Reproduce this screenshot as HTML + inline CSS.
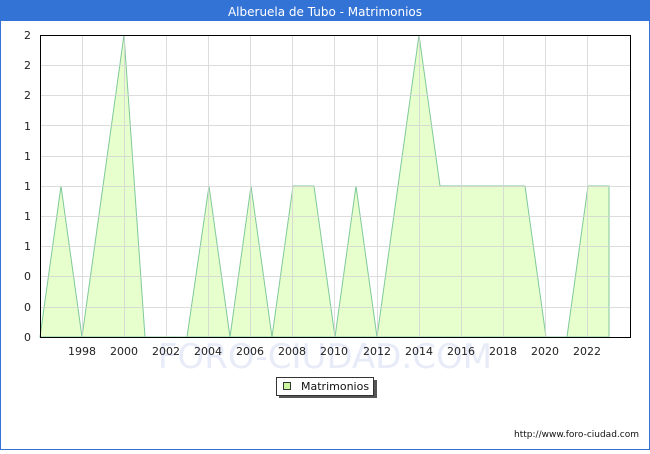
<!DOCTYPE html>
<html><head><style>
body{margin:0;width:650px;height:450px;overflow:hidden;font-family:"DejaVu Sans","Liberation Sans",sans-serif;}
</style></head><body>
<svg width="650" height="450" xmlns="http://www.w3.org/2000/svg" font-family="DejaVu Sans, Liberation Sans, sans-serif">
<rect x="0" y="0" width="650" height="450" fill="#3373d6"/>
<rect x="1" y="21" width="648" height="428" fill="#fff"/>
<text x="325" y="16" fill="#fff" font-size="12" text-anchor="middle">Alberuela de Tubo - Matrimonios</text>
<text x="325" y="368" fill="#e8ebf8" font-size="34" text-anchor="middle">FORO-CIUDAD.COM</text>
<polygon fill="#e6ffcc" stroke="#7fc99a" stroke-width="1" points="40,337 61,186 82,337 103,186 124,35 145,337 166,337 187,337 209,186 230,337 251,186 272,337 293,186 314,186 335,337 356,186 377,337 398,186 419,35 440,186 461,186 482,186 503,186 525,186 546,337 567,337 588,186 609,186 609,337"/>
<g stroke="#d4d4d4" stroke-width="1" opacity="0.8">
<line x1="40" y1="65.5" x2="630" y2="65.5"/><line x1="40" y1="95.5" x2="630" y2="95.5"/><line x1="40" y1="125.5" x2="630" y2="125.5"/><line x1="40" y1="156.5" x2="630" y2="156.5"/><line x1="40" y1="186.5" x2="630" y2="186.5"/><line x1="40" y1="216.5" x2="630" y2="216.5"/><line x1="40" y1="246.5" x2="630" y2="246.5"/><line x1="40" y1="276.5" x2="630" y2="276.5"/><line x1="40" y1="307.5" x2="630" y2="307.5"/>
<line x1="82.5" y1="35" x2="82.5" y2="337"/><line x1="124.5" y1="35" x2="124.5" y2="337"/><line x1="166.5" y1="35" x2="166.5" y2="337"/><line x1="208.5" y1="35" x2="208.5" y2="337"/><line x1="250.5" y1="35" x2="250.5" y2="337"/><line x1="292.5" y1="35" x2="292.5" y2="337"/><line x1="334.5" y1="35" x2="334.5" y2="337"/><line x1="377.5" y1="35" x2="377.5" y2="337"/><line x1="419.5" y1="35" x2="419.5" y2="337"/><line x1="461.5" y1="35" x2="461.5" y2="337"/><line x1="503.5" y1="35" x2="503.5" y2="337"/><line x1="545.5" y1="35" x2="545.5" y2="337"/><line x1="587.5" y1="35" x2="587.5" y2="337"/>
</g>
<rect x="40.5" y="35.5" width="590" height="302" fill="none" stroke="#000" stroke-width="1"/>
<g font-size="11" fill="#222" text-anchor="end">
<text x="31" y="39">2</text><text x="31" y="69">2</text><text x="31" y="99">2</text><text x="31" y="130">1</text><text x="31" y="160">1</text><text x="31" y="190">1</text><text x="31" y="220">1</text><text x="31" y="250">1</text><text x="31" y="280">0</text><text x="31" y="311">0</text><text x="31" y="341">0</text>
</g>
<g font-size="11" fill="#222" text-anchor="middle">
<text x="82" y="355">1998</text><text x="124" y="355">2000</text><text x="166" y="355">2002</text><text x="208" y="355">2004</text><text x="250" y="355">2006</text><text x="292" y="355">2008</text><text x="334" y="355">2010</text><text x="377" y="355">2012</text><text x="419" y="355">2014</text><text x="461" y="355">2016</text><text x="503" y="355">2018</text><text x="545" y="355">2020</text><text x="587" y="355">2022</text>
</g>
<rect x="279" y="380" width="98" height="18" fill="#555"/>
<rect x="276.5" y="377.5" width="97" height="18" fill="#fff" stroke="#333"/>
<rect x="283.5" y="382.5" width="7" height="7" fill="#ccf5a0" stroke="#333"/>
<text x="301" y="390" font-size="11" fill="#111">Matrimonios</text>
<text x="639" y="437" font-size="9" fill="#111" text-anchor="end">http://www.foro-ciudad.com</text>
</svg>
</body></html>
